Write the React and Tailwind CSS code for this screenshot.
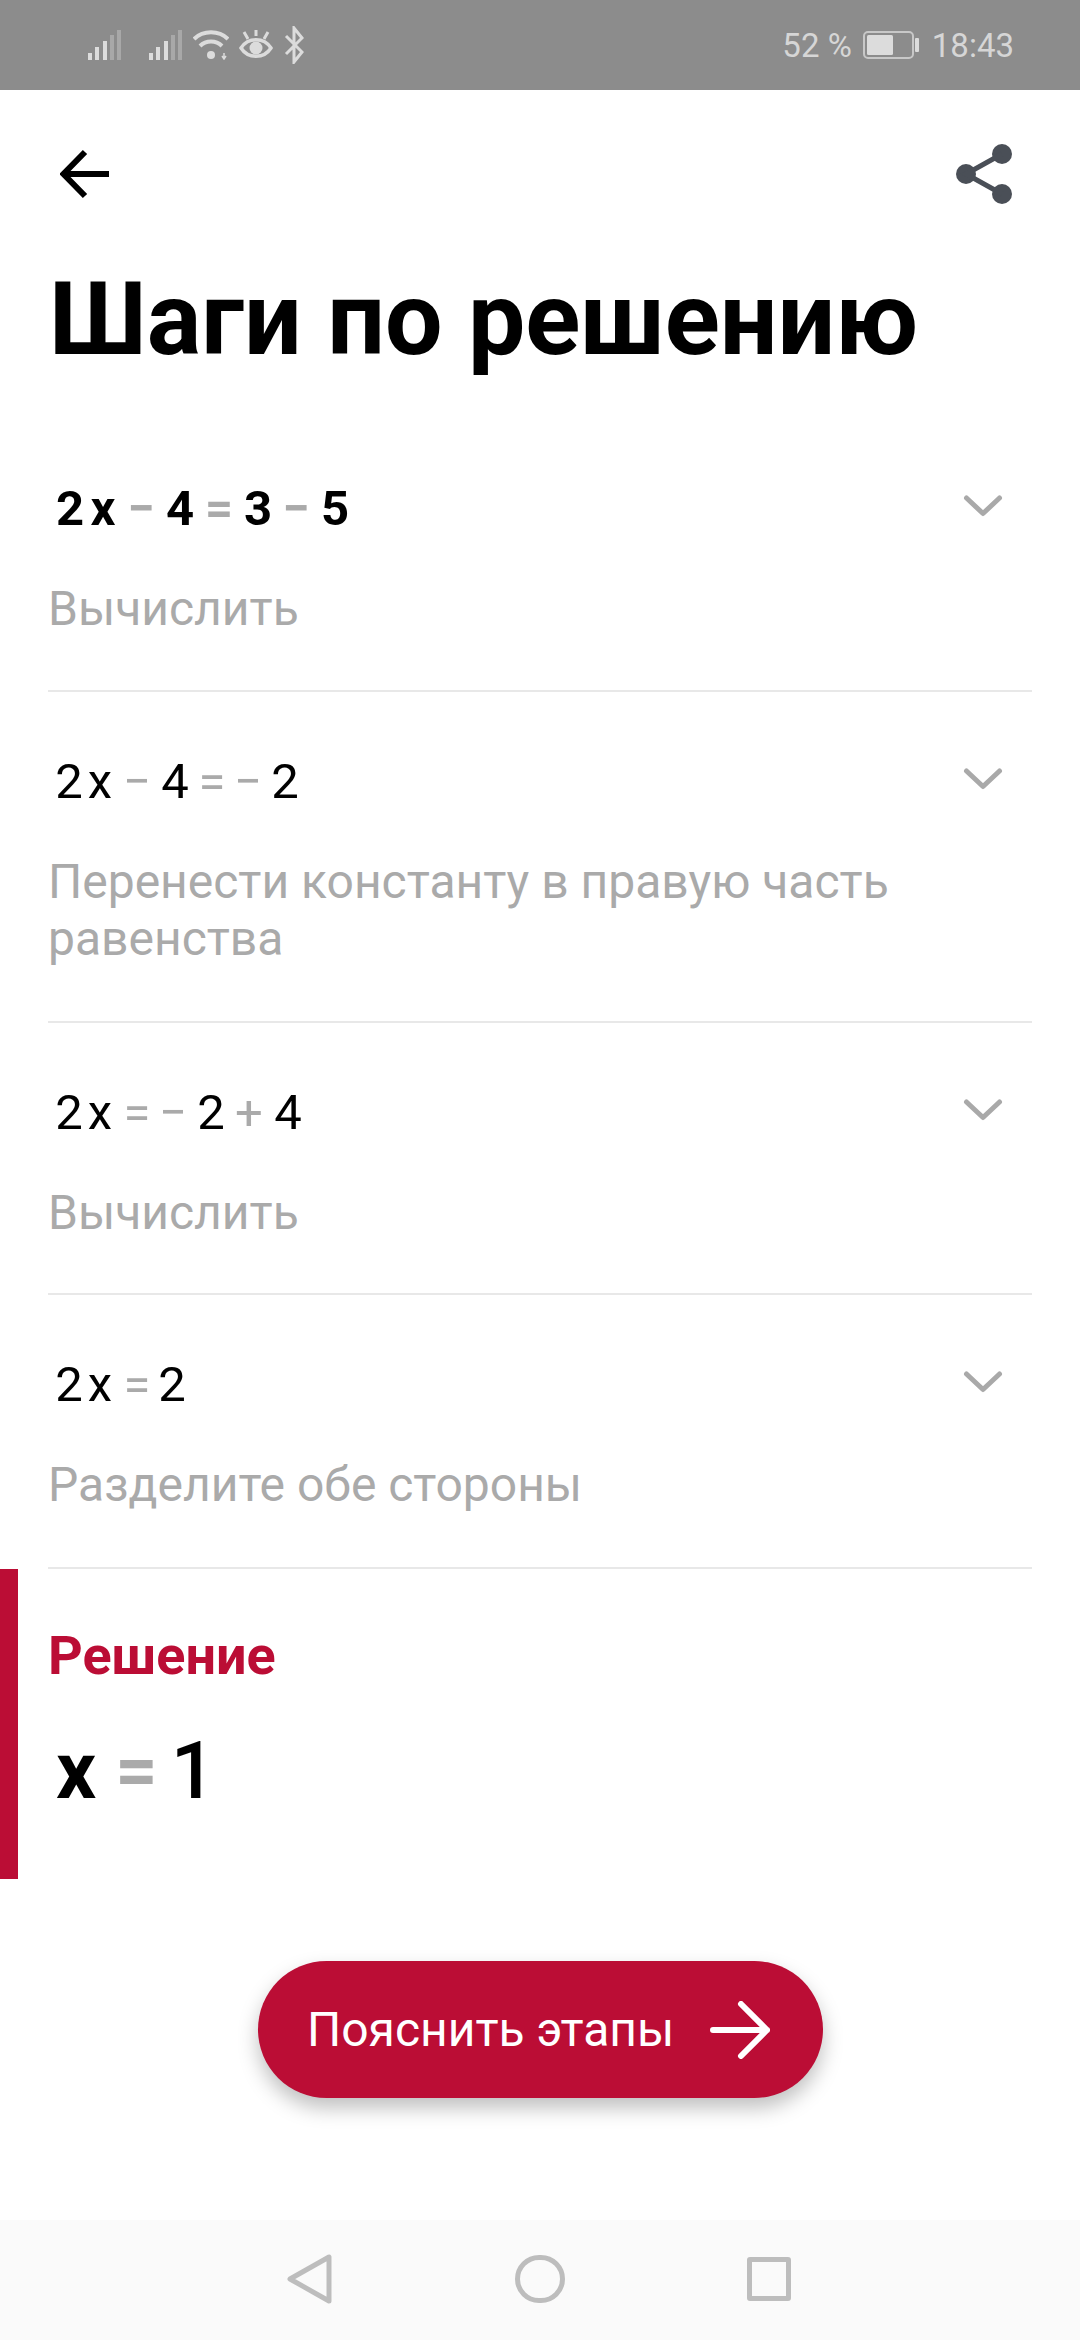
function Tok({ children, op, className = '' }) {
  return <span className={`w-[28px] text-center shrink-0 ${op ? 'text-[#aaaaaa]' : ''} ${className}`}>{children}</span>;
}

function Chevron() {
  return (
    <svg width="40" height="26" viewBox="0 0 40 26" className="mt-[-4px] mr-[29px] shrink-0">
      <path d="M3.5 4 L20 19.5 L36.5 4" fill="none" stroke="#a9a9a9" strokeWidth="5" strokeLinecap="round" strokeLinejoin="round" />
    </svg>
  );
}

function Step({ formula, desc, bold, pb }) {
  return (
    <div className={`mx-[48px] pt-[62px] border-b-2 border-[#e8e8e8] ${pb}`}>
      <div className="flex items-center justify-between h-[56px]">
        <div className={`text-[49px] leading-[56px] text-black whitespace-nowrap flex ${bold ? 'font-bold pl-[8px]' : 'pl-[7px]'}`}>{formula}</div>
        <Chevron />
      </div>
      <div className="mt-[43px] text-[48px] leading-[57px] text-[#aaaaaa]">{desc}</div>
    </div>
  );
}

function Signal() {
  return (
    <svg width="34" height="30" viewBox="0 0 34 30" className="shrink-0">
      <rect x="0" y="23" width="4" height="7" fill="#dcdcdc" />
      <rect x="7" y="17" width="4" height="13" fill="#dcdcdc" />
      <rect x="15" y="11" width="4" height="19" fill="#dcdcdc" />
      <rect x="22" y="5" width="4" height="25" fill="#a8a8a8" />
      <rect x="29" y="0" width="4" height="30" fill="#a8a8a8" />
    </svg>
  );
}

export default function App() {
  return (
    <div className="relative w-[1080px] h-[2340px] bg-white overflow-hidden flex flex-col font-['Roboto',sans-serif]">
      <div className="h-[90px] bg-[#8c8c8c] flex items-center shrink-0 text-[#d6d6d6] text-[33px] leading-none">
        <div className="ml-[88px] flex items-center">
          <Signal />
          <div className="ml-[27px]"><Signal /></div>
          <svg width="36" height="30" viewBox="0 0 36 30" className="ml-[10px]">
            <g fill="none" stroke="#dcdcdc" strokeWidth="4">
              <path d="M1 9 C10 0 26 0 35 9" />
              <path d="M7 16 C13 10 23 10 29 16" />
            </g>
            <circle cx="18" cy="25" r="4" fill="#dcdcdc" />
            <path d="M31 23v6M29 26l2 3 2-3" stroke="#dcdcdc" strokeWidth="1.5" fill="none" />
          </svg>
          <svg width="34" height="32" viewBox="0 0 34 32" className="ml-[10px]">
            <path d="M2 19 C9 8 25 8 32 19 C25 30 9 30 2 19Z" fill="none" stroke="#dcdcdc" strokeWidth="3.5" />
            <circle cx="17" cy="19" r="6.5" fill="#dcdcdc" />
            <path d="M17 1v6M5 3l4 7M29 3l-4 7" stroke="#dcdcdc" strokeWidth="3" />
          </svg>
          <svg width="20" height="38" viewBox="0 0 20 38" className="ml-[11px]">
            <path d="M2 10 L18 26 L10 36 V2 L18 12 L2 28" fill="none" stroke="#dcdcdc" strokeWidth="3" />
          </svg>
        </div>
        <div className="ml-auto mr-[66px] flex items-center">
          <span>52 %</span>
          <svg width="57" height="28" viewBox="0 0 57 28" className="ml-[11px]">
            <rect x="1" y="1" width="49" height="26" rx="4" fill="none" stroke="#c8c8c8" strokeWidth="2" />
            <rect x="4" y="4" width="26" height="20" rx="1.5" fill="#dcdcdc" />
            <rect x="52" y="7" width="4" height="14" rx="1" fill="#dcdcdc" />
          </svg>
          <span className="ml-[12px]">18:43</span>
        </div>
      </div>

      <div className="flex items-center justify-between h-[60px] mt-[54px] shrink-0">
        <svg width="50" height="50" viewBox="0 0 50 50" className="ml-[60px]">
          <path d="M49 25 H4 M25 3 L3.5 25 L25 47" fill="none" stroke="#000" strokeWidth="6" />
        </svg>
        <svg width="56" height="60" viewBox="0 0 56 60" className="mr-[68px]">
          <g fill="#4a4f57">
            <circle cx="46" cy="10" r="10" />
            <circle cx="10" cy="30" r="10" />
            <circle cx="46" cy="50" r="10" />
          </g>
          <path d="M46 10 L10 30 L46 50" fill="none" stroke="#4a4f57" strokeWidth="5" />
        </svg>
      </div>

      <h1 className="ml-[49px] mt-[59px] text-[102px] leading-[112px] font-bold text-black whitespace-nowrap shrink-0">Шаги по решению</h1>

      <div className="mt-[44px] flex flex-col shrink-0">
        <Step bold pb="pb-[53px]" desc="Вычислить" formula={<>
          <Tok>2</Tok><Tok className="ml-[5px]">x</Tok><Tok op className="ml-[10px]">−</Tok><Tok className="ml-[11px]">4</Tok><Tok op className="ml-[11px]">=</Tok><Tok className="ml-[11px]">3</Tok><Tok op className="ml-[10px]">−</Tok><Tok className="ml-[11px]">5</Tok>
        </>} />
        <Step pb="pb-[54px]" desc={<>Перенести константу в правую часть<br />равенства</>} formula={<>
          <Tok>2</Tok><Tok className="ml-[3px]">x</Tok><Tok op className="ml-[9px]">−</Tok><Tok className="ml-[10px]">4</Tok><Tok op className="ml-[9px]">=</Tok><Tok op className="ml-[8px]">−</Tok><Tok className="ml-[9px]">2</Tok>
        </>} />
        <Step pb="pb-[52px]" desc="Вычислить" formula={<>
          <Tok>2</Tok><Tok className="ml-[3px]">x</Tok><Tok op className="ml-[9px]">=</Tok><Tok op className="ml-[8px]">−</Tok><Tok className="ml-[10px]">2</Tok><Tok op className="ml-[10px]">+</Tok><Tok className="ml-[11px]">4</Tok>
        </>} />
        <Step pb="pb-[54px]" desc="Разделите обе стороны" formula={<>
          <Tok>2</Tok><Tok className="ml-[3px]">x</Tok><Tok op className="ml-[9px]">=</Tok><Tok className="ml-[7px]">2</Tok>
        </>} />
      </div>

      <div className="h-[310px] border-l-[18px] border-[#bb0d35] pl-[30px] pt-[57px] shrink-0">
        <div className="text-[54px] leading-[60px] font-bold text-[#bb0d35]">Решение</div>
        <div className="mt-[39px] pl-[8px] text-[79px] leading-[92px] text-black flex">
          <span className="font-bold">x</span>
          <span className="ml-[19px] text-[74px] font-bold text-[#aaaaaa]">=</span>
          <span className="ml-[13px] font-medium">1</span>
        </div>
      </div>

      <div className="mt-[82px] flex justify-center shrink-0">
        <div className="ml-[1px] w-[565px] h-[137px] rounded-full bg-[#bb0d35] shadow-[0_10px_20px_rgba(0,0,0,0.25)] flex items-center text-white text-[48px] pl-[49px]">
          <span className="whitespace-nowrap">Пояснить этапы</span>
          <svg width="60" height="58" viewBox="0 0 60 58" className="ml-auto mr-[53px]">
            <path d="M3 29 H57 M31 3 L57 29 L31 55" fill="none" stroke="#fff" strokeWidth="6" strokeLinecap="round" strokeLinejoin="round" />
          </svg>
        </div>
      </div>

      <div className="mt-auto h-[120px] bg-[#fafafa] flex items-start shrink-0">
        <svg width="48" height="52" viewBox="0 0 48 52" className="ml-[285px] mt-[33px]">
          <path d="M44 4 V48 L5 26 Z" fill="none" stroke="#bdbdbd" strokeWidth="5" strokeLinejoin="round" />
        </svg>
        <div className="ml-[182px] mt-[35px] w-[50px] h-[48px] rounded-full border-[5px] border-[#bdbdbd]" />
        <div className="ml-[182px] mt-[37px] w-[44px] h-[44px] rounded-[3px] border-[5px] border-[#bdbdbd]" />
      </div>
    </div>
  );
}
